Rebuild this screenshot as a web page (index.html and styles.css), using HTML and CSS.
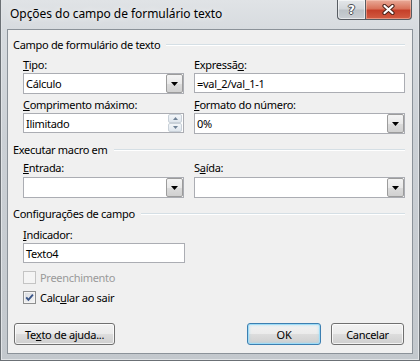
FILE: index.html
```html
<!DOCTYPE html>
<html lang="pt">
<head>
<meta charset="utf-8">
<title>Opções do campo de formulário texto</title>
<link rel="stylesheet" href="styles.css">
</head>
<body>
<div class="window">
  <div class="titlebar">
    <div class="title">Opções do campo de formulário texto</div>
    <div class="caption-buttons">
      <div class="cap-btn help"><span class="help-glyph">?</span></div>
      <div class="cap-btn close">
        <svg width="13" height="11" viewBox="0 0 13 11"><path d="M2.5 2 L10.5 9 M10.5 2 L2.5 9" stroke="#4a2219" stroke-width="4.2" stroke-linecap="round"/><path d="M2.5 2 L10.5 9 M10.5 2 L2.5 9" stroke="#ffffff" stroke-width="2.2" stroke-linecap="round"/></svg>
      </div>
    </div>
  </div>
  <div class="client">
    <div class="group-header"><span>Campo de formulário de texto</span><div class="rule"></div></div>
    <div class="fields">
      <div class="field">
        <div class="lbl"><u>T</u>ipo:</div>
        <div class="combo"><span class="value">Cálculo</span><span class="drop"><svg width="7" height="4" viewBox="0 0 7 4"><path d="M0 0H7L3.5 4Z" fill="#000"/></svg></span></div>
      </div>
      <div class="field">
        <div class="lbl">Expressã<u>o</u>:</div>
        <div class="input"><span class="value">=val_2/val_1-1</span></div>
      </div>
      <div class="field">
        <div class="lbl"><u>C</u>omprimento máximo:</div>
        <div class="input"><span class="value">Ilimitado</span><span class="spin"><span class="spin-btn"><svg width="5" height="3" viewBox="0 0 5 3"><path d="M0 3H5L2.5 0Z" fill="#6f8296"/></svg></span><span class="spin-btn"><svg width="5" height="3" viewBox="0 0 5 3"><path d="M0 0H5L2.5 3Z" fill="#6f8296"/></svg></span></span></div>
      </div>
      <div class="field">
        <div class="lbl"><u>F</u>ormato do número:</div>
        <div class="combo"><span class="value">0%</span><span class="drop"><svg width="7" height="4" viewBox="0 0 7 4"><path d="M0 0H7L3.5 4Z" fill="#000"/></svg></span></div>
      </div>
    </div>

    <div class="group-header gap-top"><span>Executar macro em</span><div class="rule"></div></div>
    <div class="fields macro">
      <div class="field">
        <div class="lbl"><u>E</u>ntrada:</div>
        <div class="combo"><span class="value"></span><span class="drop"><svg width="7" height="4" viewBox="0 0 7 4"><path d="M0 0H7L3.5 4Z" fill="#000"/></svg></span></div>
      </div>
      <div class="field">
        <div class="lbl">S<u>a</u>ída:</div>
        <div class="combo"><span class="value"></span><span class="drop"><svg width="7" height="4" viewBox="0 0 7 4"><path d="M0 0H7L3.5 4Z" fill="#000"/></svg></span></div>
      </div>
    </div>

    <div class="group-header gap-top"><span>Configurações de campo</span><div class="rule"></div></div>
    <div class="field single">
      <div class="lbl"><u>I</u>ndicador:</div>
      <div class="input"><span class="value">Texto4</span></div>
    </div>
    <div class="checks">
      <div class="check disabled">
        <span class="box"></span><span class="check-text">Preenchimento</span>
      </div>
      <div class="check">
        <span class="box checked"><svg width="11" height="11" viewBox="0 0 11 11"><path d="M2.2 5.4 L4.4 7.9 L8.9 2.6" fill="none" stroke="#3a5588" stroke-width="1.9"/></svg></span><span class="check-text">Calc<u>u</u>lar ao sair</span>
      </div>
    </div>

    <div class="buttons">
      <div class="btn btn-help">Te<u>x</u>to de ajuda...</div>
      <div class="right">
        <div class="btn btn-ok">OK</div>
        <div class="btn btn-cancel">Cancelar</div>
      </div>
    </div>
  </div>
</div>
</body>
</html>
```

FILE: styles.css
```css
* { box-sizing: border-box; }
html, body { margin: 0; padding: 0; }
body {
  width: 420px;
  height: 361px;
  overflow: hidden;
  font-family: "Noto Sans", "Open Sans", sans-serif;
  font-size: 11px;
  letter-spacing: -0.3px;
  color: #000;
  background: #c4c9ce;
}
u { text-decoration-thickness: 1px; text-underline-offset: 1px; }

.window {
  width: 420px;
  height: 361px;
  display: flex;
  flex-direction: column;
  background: linear-gradient(180deg, #e0e3e6 0px, #d7dbdf 29px, #cbd0d5 140px, #c3c8cd 100%);
  box-shadow: inset 1px 0 0 #6b7075, inset -1px 0 0 #6b7075, inset 0 -1px 0 #6b7075,
              inset 2px 0 0 #e1e4e7, inset -2px 0 0 #e1e4e7, inset 0 -2px 0 #e1e4e7;
}

.titlebar {
  height: 29px;
  flex: none;
  display: flex;
  align-items: flex-start;
}
.title {
  padding: 5px 0 0 10px;
  font-size: 12px;
  line-height: 17px;
  letter-spacing: -0.05px;
  color: #000;
  text-shadow: 0 0 6px rgba(255,255,255,0.9);
}
.caption-buttons {
  margin-left: auto;
  margin-right: 8px;
  display: flex;
  height: 20px;
}
.cap-btn {
  height: 20px;
  display: flex;
  align-items: center;
  justify-content: center;
  border: 1px solid #575c62;
  border-top: none;
}
.help {
  width: 28px;
  border-right: none;
  border-bottom-left-radius: 4px;
  background: linear-gradient(180deg, #e4e7ea 0%, #d2d6da 48%, #bcc2c7 52%, #c9ced3 100%);
  box-shadow: inset 0 0 0 1px rgba(255,255,255,0.55);
}
.help-glyph {
  font-family: "DejaVu Sans", sans-serif;
  font-weight: bold;
  font-size: 12px;
  line-height: 12px;
  letter-spacing: 0;
  color: #fff;
  text-shadow: -1px 0 #4a4f55, 1px 0 #4a4f55, 0 -1px #4a4f55, 0 1px #4a4f55;
}
.close {
  width: 47px;
  border-bottom-right-radius: 4px;
  background: linear-gradient(180deg, #e9ab99 0%, #d9735b 45%, #c5402a 55%, #d25c42 100%);
  box-shadow: inset 0 0 0 1px rgba(255,215,200,0.45);
}

.client {
  flex: 1;
  margin: 0 7px 7px;
  border: 1px solid #8b9299;
  background: #f0f0f0;
  padding: 7px 7px 8px 5px;
  display: flex;
  flex-direction: column;
}

.group-header {
  display: flex;
  align-items: center;
  height: 15px;
  line-height: 15px;
}
.group-header.gap-top { margin-top: 8px; }
.rule {
  flex: 1;
  margin-left: 6px;
  border-top: 1px solid #d5dfe5;
  border-bottom: 1px solid #ffffff;
}

.fields {
  display: grid;
  grid-template-columns: 161px 211px;
  column-gap: 10px;
  row-gap: 3px;
  margin: 5px 0 0 10px;
  align-items: start;
}
.fields.macro { margin-top: 3px; }
.fields.macro .field { gap: 2px; }
.field {
  display: flex;
  flex-direction: column;
  gap: 1px;
}
.field.single {
  width: 162px;
  margin: 6px 0 0 10px;
}
.lbl {
  height: 15px;
  line-height: 15px;
}

.input, .combo {
  height: 20px;
  border: 1px solid #abadb3;
  background: #fff;
  display: flex;
  align-items: center;
  padding-left: 2px;
  line-height: 15px;
}
.combo { height: 21px; }
.value { flex: 1; white-space: nowrap; }
.drop {
  width: 17px;
  height: 100%;
  flex: none;
  display: flex;
  align-items: center;
  justify-content: center;
  border: 1px solid #9c9c9c;
  border-radius: 2px;
  background: linear-gradient(180deg, #f4f4f4 0%, #e9e9e9 50%, #dcdcdc 51%, #d0d0d0 100%);
}
.spin {
  width: 14px;
  height: 100%;
  margin-right: 1px;
  flex: none;
  display: flex;
  flex-direction: column;
}
.spin-btn {
  flex: 1;
  display: flex;
  align-items: center;
  justify-content: center;
  border: 1px solid #c9d1d9;
  border-radius: 2px;
  background: linear-gradient(180deg, #f3f6f9 0%, #dfe6ed 100%);
}

.checks {
  margin: 7px 0 0 10px;
  display: flex;
  flex-direction: column;
  gap: 5px;
}
.check {
  display: flex;
  align-items: center;
  height: 15px;
  line-height: 15px;
}
.box {
  width: 13px;
  height: 13px;
  flex: none;
  border: 1px solid #8e8f8f;
  background: linear-gradient(135deg, #d8dbdf 0%, #f6f6f6 100%);
  box-shadow: inset 0 0 0 1px #f4f4f4;
  display: flex;
  align-items: center;
  justify-content: center;
}
.check-text { margin-left: 4px; }
.check.disabled .box {
  border-color: #c4c4c4;
  background: #f4f4f4;
  box-shadow: none;
}
.check.disabled .check-text { color: #9a9a9a; }

.buttons {
  margin-top: auto;
  display: flex;
  align-items: center;
  padding: 0 1px;
}
.btn {
  height: 22px;
  border: 1px solid #707070;
  border-radius: 3px;
  background: linear-gradient(180deg, #f2f2f2 0%, #ebebeb 50%, #dddddd 51%, #cfcfcf 100%);
  box-shadow: inset 0 0 0 1px rgba(255,255,255,0.75);
  display: flex;
  align-items: center;
  justify-content: center;
  line-height: 15px;
}
.btn-help { width: 101px; }
.right {
  margin-left: auto;
  display: flex;
  gap: 10px;
}
.btn-ok {
  width: 74px;
  border-color: #3c7fb1;
  box-shadow: inset 0 0 0 1px #9fdcf6, inset 0 0 3px 1px rgba(150,215,245,0.6);
}
.btn-cancel { width: 73px; }
```
